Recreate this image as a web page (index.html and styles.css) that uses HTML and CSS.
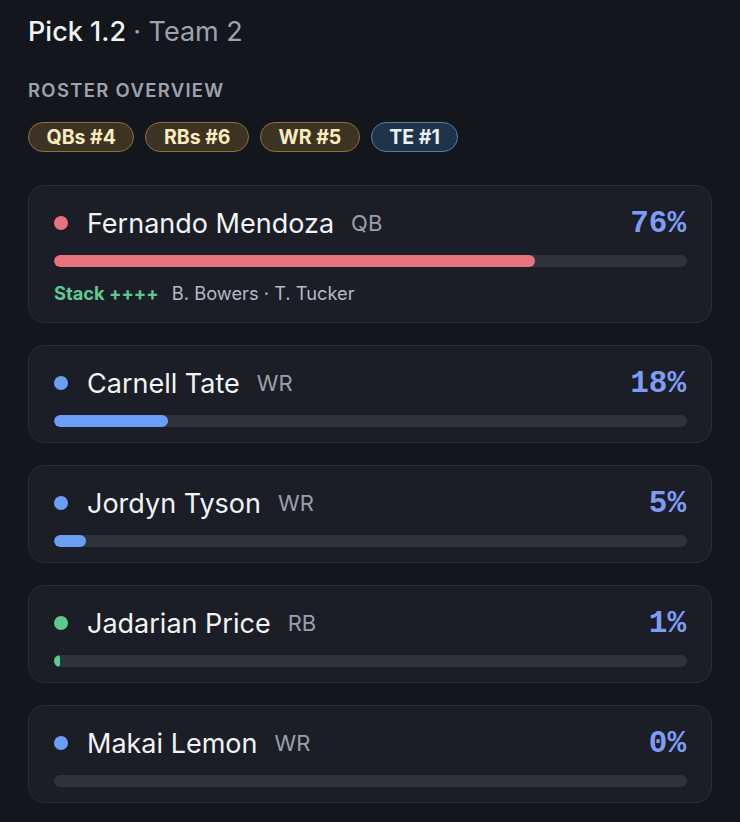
FILE: index.html
```html
<!DOCTYPE html>
<html lang="en">
<head>
  <meta charset="UTF-8">
  <meta name="viewport" content="width=device-width, initial-scale=1">
  <title>Pick 1.2 · Team 2</title>
  <link rel="stylesheet" href="styles.css">
</head>
<body>
  <h2 class="title">Pick 1.2 <span class="team">· Team 2</span></h2>

  <div class="section-label">Roster Overview</div>
  <div class="chips">
    <span class="chip gold">QBs #4</span>
    <span class="chip gold">RBs #6</span>
    <span class="chip gold">WR #5</span>
    <span class="chip blue">TE #1</span>
  </div>

  <div class="list">
    <div class="card">
      <div class="card-head">
        <span class="dot qb"></span>
        <span class="name">Fernando Mendoza</span>
        <span class="pos">QB</span>
        <span class="pct">76%</span>
      </div>
      <div class="bar"><div class="fill qb" style="width: 76%"></div></div>
      <div class="stack"><span class="stack-tag">Stack ++++</span> B. Bowers · T. Tucker</div>
    </div>

    <div class="card">
      <div class="card-head">
        <span class="dot wr"></span>
        <span class="name">Carnell Tate</span>
        <span class="pos">WR</span>
        <span class="pct">18%</span>
      </div>
      <div class="bar"><div class="fill wr" style="width: 18%"></div></div>
    </div>

    <div class="card">
      <div class="card-head">
        <span class="dot wr"></span>
        <span class="name">Jordyn Tyson</span>
        <span class="pos">WR</span>
        <span class="pct">5%</span>
      </div>
      <div class="bar"><div class="fill wr" style="width: 5%"></div></div>
    </div>

    <div class="card">
      <div class="card-head">
        <span class="dot rb"></span>
        <span class="name">Jadarian Price</span>
        <span class="pos">RB</span>
        <span class="pct">1%</span>
      </div>
      <div class="bar"><div class="fill rb" style="width: 1%"></div></div>
    </div>

    <div class="card">
      <div class="card-head">
        <span class="dot wr"></span>
        <span class="name">Makai Lemon</span>
        <span class="pos">WR</span>
        <span class="pct">0%</span>
      </div>
      <div class="bar"><div class="fill wr" style="width: 0%"></div></div>
    </div>
  </div>
</body>
</html>
```

FILE: styles.css
```css
body {
  font-family: Inter, "Noto Sans", sans-serif;
  margin: 0;
  padding: 16px 28px 20px;
  background: #13161d;
  color: #f1f3f5;
}
.title {
  margin: 0;
  font-size: 27px;
  line-height: 32px;
  font-weight: 500;
}
.team {
  color: #9ca3af;
  font-weight: 400;
}
.section-label {
  margin-top: 30px;
  font-size: 18.5px;
  line-height: 24px;
  font-weight: 600;
  letter-spacing: 1.3px;
  text-transform: uppercase;
  color: #9ca3af;
}
.chips {
  display: flex;
  gap: 11px;
  margin-top: 20px;
}
.chip {
  box-sizing: border-box;
  height: 30px;
  display: flex;
  align-items: center;
  padding: 0 17.5px;
  border-radius: 15px;
  border: 1.5px solid;
  font-size: 19.5px;
  font-weight: 700;
}
.chip.gold {
  background: #3e3322;
  border-color: #8a7140;
  color: #fbecc0;
}
.chip.blue {
  background: #1f344a;
  border-color: #52809f;
  color: #e8f0f8;
}
.list {
  display: flex;
  flex-direction: column;
  gap: 22px;
  margin-top: 33px;
}
.card {
  background: #1b1e26;
  border: 1px solid #2a2e37;
  border-radius: 16px;
  padding: 20px 24px 15px 25px;
}
.card-head {
  display: flex;
  align-items: center;
  height: 34px;
}
.dot {
  width: 14px;
  height: 14px;
  border-radius: 50%;
  margin-right: 19px;
}
.name {
  font-size: 27px;
}
.pos {
  margin-left: 17px;
  font-size: 22px;
  color: #9aa0ab;
}
.pct {
  margin-left: auto;
  margin-right: 1px;
  font-family: "Liberation Mono", monospace;
  font-weight: 700;
  font-size: 31px;
  color: #7f9cf5;
}
.bar {
  margin-top: 15px;
  height: 12px;
  border-radius: 6px;
  background: #2f333c;
  overflow: hidden;
}
.fill {
  height: 100%;
  border-radius: 6px;
}
.qb { background: #e8737f; }
.wr { background: #6b9ef5; }
.rb { background: #5cc98f; }
.stack {
  margin-top: 12px;
  line-height: 28px;
  font-size: 18.3px;
  color: #b5bac4;
}
.stack-tag {
  color: #5cc98f;
  font-weight: 700;
  margin-right: 8px;
}
```
